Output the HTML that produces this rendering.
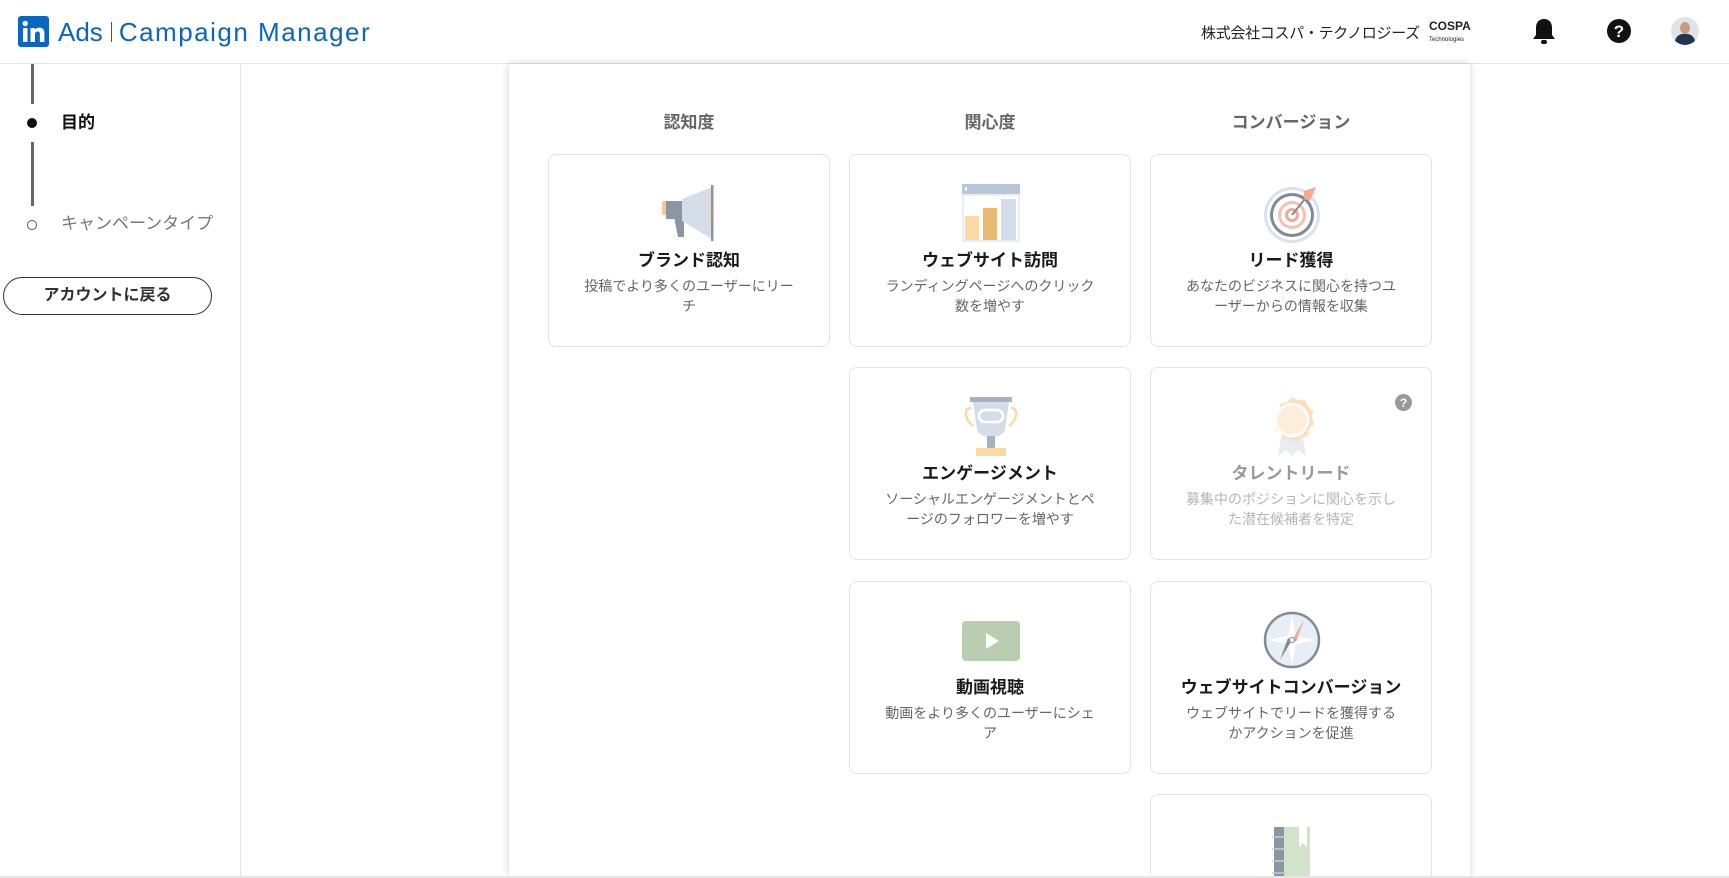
<!DOCTYPE html>
<html><head><meta charset="utf-8"><style>
*{box-sizing:border-box;margin:0;padding:0}
html,body{width:1729px;height:878px;overflow:hidden}
body{background:#fff;font-family:"Liberation Sans","Noto Sans CJK JP",sans-serif}
#w{position:relative;width:1729px;height:878px;overflow:hidden}
.hdr{position:absolute;left:0;top:0;width:1729px;height:64px;border-bottom:1px solid #e6e6e6;background:#fff}
.side{position:absolute;left:0;top:64px;width:241px;height:812px;border-right:1px solid #e6e6e6}
.panel{position:absolute;left:509px;top:64px;width:961px;height:812px;background:#fff;box-shadow:0 0 8px rgba(0,0,0,.18)}
.bot{position:absolute;left:0;top:876px;width:1729px;height:2px;background:#e6e6e6}
.colh{position:absolute;top:108px;width:282px;text-align:center;font-size:17px;font-weight:bold;color:#666}
.card{position:absolute;width:282px;height:193px;border:1px solid #e3e3e3;border-radius:8px;background:#fff;text-align:center;overflow:hidden}
.card svg{position:absolute;left:111px;top:28px}
.card .t{position:absolute;top:91px;left:0;width:100%;font-size:17px;font-weight:bold;color:#1a1a1a}
.card .d{position:absolute;top:121px;left:30px;width:220px;font-size:14px;line-height:20px;color:#666}
.dis .t{color:#9a9a9a}.dis .d{color:#b5b5b5}
</style></head><body><div id="w">
<div class="hdr">
  <svg style="position:absolute;left:18px;top:16px" width="31" height="31" viewBox="0 0 31 31"><rect width="31" height="31" rx="3" fill="#0a66c2"/><rect x="5" y="12" width="4.5" height="14" fill="#fff"/><circle cx="7.2" cy="7.5" r="2.7" fill="#fff"/><path d="M12.5 12h4.3v2c.8-1.4 2.4-2.4 4.6-2.4 4 0 5 2.5 5 6V26h-4.5v-7.5c0-2-.6-3-2.2-3-1.8 0-2.7 1.2-2.7 3.2V26h-4.5z" fill="#fff"/></svg>
  <div style="position:absolute;left:58px;top:17px;font-size:26px;color:#0a66c2;white-space:nowrap">Ads<span style="display:inline-block;width:1px;height:20px;background:#0a66c2;margin:0 7px 0 8px;vertical-align:-1px"></span><span style="letter-spacing:1.5px">Campaign Manager</span></div>
  <div style="position:absolute;left:1201px;top:22px;font-size:15px;color:#222;letter-spacing:-0.3px">株式会社コスパ・テクノロジーズ</div>
  <div style="position:absolute;left:1429px;top:21px;font-size:12px;font-weight:bold;color:#222;line-height:11px">COSPA<br><span style="font-size:6px;font-weight:normal">Technologies</span></div>
  <svg style="position:absolute;left:1531px;top:18px" width="26" height="28" viewBox="0 0 26 28"><path d="M13 1c-5 0-8 3.5-8 8.5V17L2 21h22l-3-4V9.5C21 4.5 18 1 13 1z" fill="#111"/><rect x="10" y="22" width="6" height="4" rx="2" fill="#111"/></svg>
  <svg style="position:absolute;left:1607px;top:19px" width="24" height="24" viewBox="0 0 24 24"><circle cx="12" cy="12" r="12" fill="#111"/><text x="12" y="18" text-anchor="middle" font-size="17" font-weight="bold" fill="#fff" font-family="Liberation Sans">?</text></svg>
  <div style="position:absolute;left:1671px;top:17px;width:28px;height:28px;border-radius:50%;background:#dfe4ea;overflow:hidden"><div style="position:absolute;left:9px;top:5px;width:10px;height:12px;border-radius:50%;background:#c99a7e"></div><div style="position:absolute;left:4px;top:17px;width:20px;height:14px;background:#1f3352;border-radius:8px 8px 0 0"></div></div>
</div>
<div class="side">
  <div style="position:absolute;left:31px;top:0;width:3px;height:40px;background:#666"></div>
  <div style="position:absolute;left:27px;top:54px;width:10px;height:10px;border-radius:50%;background:#111"></div>
  <div style="position:absolute;left:61px;top:44px;font-size:17px;font-weight:bold;color:#111">目的</div>
  <div style="position:absolute;left:31px;top:78px;width:3px;height:64px;background:#666"></div>
  <div style="position:absolute;left:27px;top:156px;width:10px;height:10px;border-radius:50%;border:1.5px solid #555"></div>
  <div style="position:absolute;left:61px;top:145px;font-size:17px;color:#777">キャンペーンタイプ</div>
  <div style="position:absolute;left:3px;top:213px;width:209px;height:38px;border:1px solid #333;border-radius:19px;text-align:center;line-height:36px;font-size:16px;font-weight:bold;color:#333">アカウントに戻る</div>
</div>
<div class="panel"></div>
<div class="colh" style="left:548px">認知度</div>
<div class="colh" style="left:849px">関心度</div>
<div class="colh" style="left:1150px">コンバージョン</div>

<div class="card" style="left:548px;top:154px">
<svg width="60" height="60" viewBox="0 0 60 60"><rect x="2" y="18" width="6" height="14" rx="2" fill="#f6c992"/><path d="M6 18h18v36h-6l-4-20H6z" fill="#8a96a3"/><path d="M22 16L52 4v52L22 38z" fill="#d5dee8"/><path d="M52 8v32" stroke="#f6c992" stroke-width="3"/><rect x="51" y="2" width="2.5" height="56" fill="#8a96a3"/><path d="M6 18h16v18H6z" fill="#8a96a3"/></svg>
<div class="t">ブランド認知</div><div class="d">投稿でより多くのユーザーにリーチ</div></div>

<div class="card" style="left:849px;top:154px">
<svg width="60" height="60" viewBox="0 0 60 60"><rect x="1" y="1" width="58" height="58" fill="#e8eef4"/><rect x="1" y="1" width="58" height="10" fill="#b8c7d6"/><rect x="4" y="4" width="2" height="4" rx="1" fill="#fff"/><rect x="3" y="13" width="54" height="44" fill="#fff"/><rect x="4" y="33" width="14" height="24" fill="#fbd9a3"/><rect x="22" y="25" width="14" height="32" fill="#eab86f"/><rect x="40" y="16" width="15" height="41" fill="#d5dee8"/></svg>
<div class="t">ウェブサイト訪問</div><div class="d">ランディングページへのクリック数を増やす</div></div>

<div class="card" style="left:1150px;top:154px">
<svg width="60" height="60" viewBox="0 0 60 60"><circle cx="30" cy="32" r="28" fill="#d8e2ee"/><circle cx="30" cy="32" r="25" fill="#fff"/><circle cx="30" cy="32" r="22" fill="#808b98"/><circle cx="30" cy="32" r="19" fill="#fff"/><circle cx="30" cy="32" r="14" fill="#f6c0ae"/><circle cx="30" cy="32" r="11" fill="#fff"/><circle cx="30" cy="32" r="7" fill="#f5a993"/><circle cx="30" cy="32" r="4" fill="#fff"/><path d="M30 32L46 12" stroke="#808b98" stroke-width="2"/><path d="M42 8l12-4-6 14-6-2z" fill="#f5a993"/></svg>
<div class="t">リード獲得</div><div class="d">あなたのビジネスに関心を持つユーザーからの情報を収集</div></div>

<div class="card" style="left:849px;top:367px">
<svg width="60" height="60" viewBox="0 0 60 60"><path d="M10 12c-8 0-6 12 2 18M50 12c8 0 6 12-2 18" fill="none" stroke="#fbd9a3" stroke-width="2.5"/><rect x="9" y="1" width="42" height="5" fill="#a4b2c2"/><path d="M12 6h36l-4 28c-2 5-8 7-14 7s-12-2-14-7z" fill="#d5dee8"/><rect x="18" y="14" width="24" height="12" rx="6" fill="none" stroke="#fff" stroke-width="2.5"/><rect x="26" y="40" width="8" height="12" fill="#a4b2c2"/><rect x="15" y="52" width="30" height="8" fill="#fbd9a3"/></svg>
<div class="t">エンゲージメント</div><div class="d">ソーシャルエンゲージメントとページのフォロワーを増やす</div></div>

<div class="card dis" style="left:1150px;top:367px">
<svg style="left:244px;top:26px" width="17" height="17" viewBox="0 0 17 17"><circle cx="8.5" cy="8.5" r="8.5" fill="#999"/><text x="8.5" y="13" text-anchor="middle" font-size="12" font-weight="bold" fill="#fff" font-family="Liberation Sans">?</text></svg>
<svg width="60" height="60" viewBox="0 0 60 60"><path d="M20 36l-4 24 8-6 6 6V36zM40 36l4 24-8-6-6 6V36z" fill="#e7ecf2"/><path d="M30 1l6 3 7 0 3 6 5 5-1 7 2 6-5 5-1 7-7 2-5 4-5-3-7 0-3-6-5-4 1-7-3-6 5-5 1-7 7-2z" fill="#fbe1bb"/><circle cx="30" cy="24" r="16" fill="#fdeedb" stroke="#fff" stroke-width="2.5"/></svg>
<div class="t">タレントリード</div><div class="d">募集中のポジションに関心を示した潜在候補者を特定</div></div>

<div class="card" style="left:849px;top:581px">
<svg width="60" height="60" viewBox="0 0 60 60"><rect x="1" y="11" width="58" height="40" rx="4" fill="#b9cdb1"/><path d="M25 23l13 8-13 8z" fill="#fff"/></svg>
<div class="t">動画視聴</div><div class="d">動画をより多くのユーザーにシェア</div></div>

<div class="card" style="left:1150px;top:581px">
<svg width="60" height="60" viewBox="0 0 60 60"><circle cx="30" cy="30" r="27" fill="#e8eef5" stroke="#808b98" stroke-width="2.5"/><path d="M30 6l4 20 20 4-20 4-4 20-4-20-20-4 20-4z" fill="#fff"/><path d="M30 30l12-20-8 22z" fill="#f5a993"/><path d="M30 30l-12 20 8-22z" fill="#808b98"/><circle cx="30" cy="30" r="2.5" fill="#fff" stroke="#808b98"/></svg>
<div class="t">ウェブサイトコンバージョン</div><div class="d">ウェブサイトでリードを獲得するかアクションを促進</div></div>

<div class="card" style="left:1150px;top:794px;height:82px;border-bottom:none;border-radius:8px 8px 0 0">
<svg width="60" height="60" viewBox="0 0 60 60"><rect x="12" y="4" width="10" height="60" fill="#8a96a3"/><rect x="22" y="4" width="26" height="60" fill="#d2e3c9"/><path d="M37 4v20l4-4 4 4V4z" fill="#fff"/><g stroke="#c5ced8" stroke-width="1.5"><path d="M10 14h14M10 26h14M10 38h14M10 50h14"/></g></svg>
</div>
<div class="bot"></div>
</div></body></html>
